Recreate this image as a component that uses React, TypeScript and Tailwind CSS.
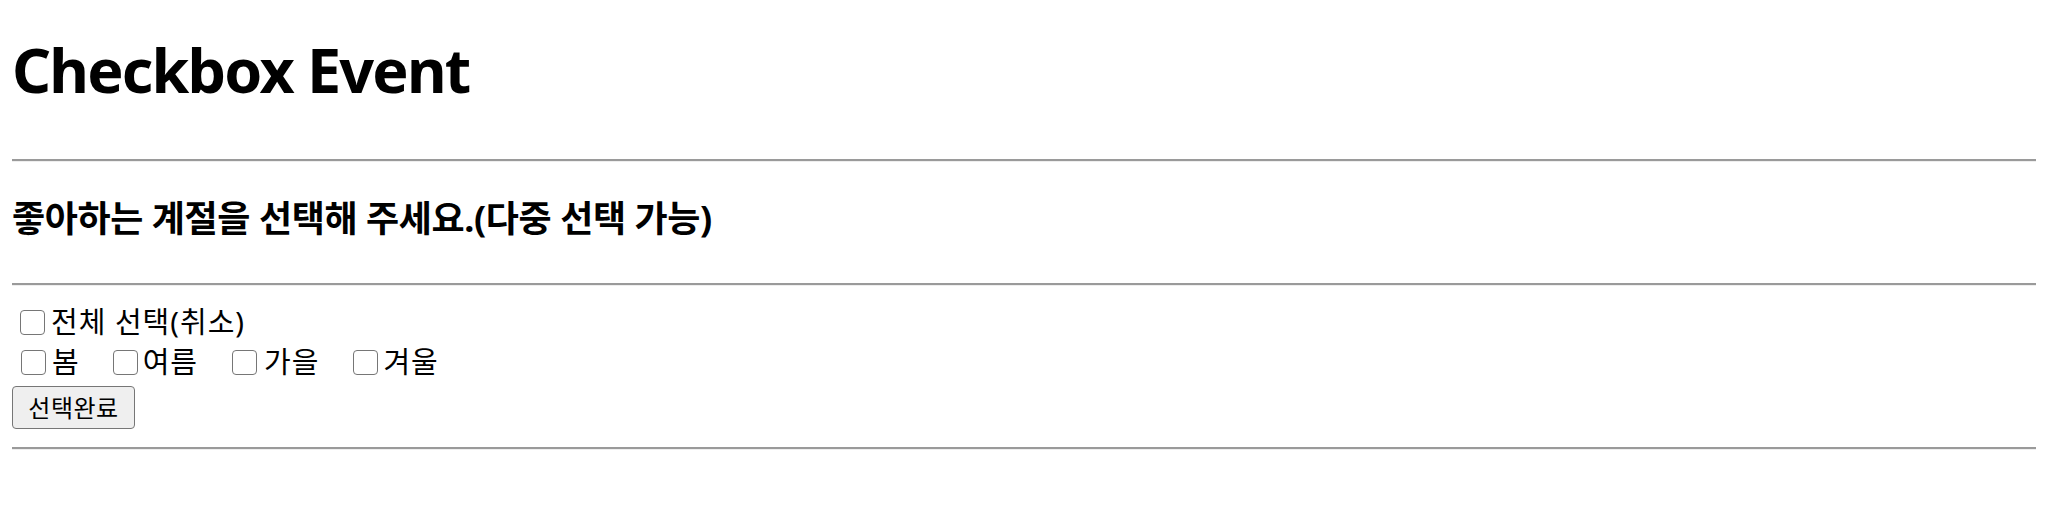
import React from "react";

const Box = ({ className = "" }: { className?: string }) => (
  <input
    type="checkbox"
    className={
      "appearance-none w-[25px] h-[25px] shrink-0 rounded-[4px] border-[1.5px] border-[#767676] bg-white " +
      className
    }
  />
);

export default function App() {
  return (
    <div
      className="pl-[12px] pr-[16px] text-black bg-white min-h-[526px]"
      style={{ fontFamily: '"Noto Sans", "Noto Sans CJK KR", sans-serif' }}
    >
      <h1 className="h-[159px] pt-[34px] text-[61px] leading-[72px] font-bold tracking-[-1.8px]">
        Checkbox Event
      </h1>
      <div className="h-[3px] border-t-[2px] border-t-[#9a9a9a] border-b border-b-[#eeeeee]" />
      <h2 className="h-[121px] pt-[37px] text-[36px] leading-[40px] font-bold tracking-[-0.4px]">
        좋아하는 계절을 선택해 주세요.(다중 선택 가능)
      </h2>
      <div className="h-[3px] border-t-[2px] border-t-[#9a9a9a] border-b border-b-[#eeeeee]" />
      <div className="pt-[16px] text-[29px] tracking-[1px]">
        <div className="flex items-center h-[40px]">
          <Box className="ml-[8px]" />
          <label className="ml-[6px] leading-[40px]">전체 선택(취소)</label>
        </div>
        <div className="flex items-center h-[40px]">
          <Box className="ml-[9px]" />
          <label className="ml-[6px] leading-[40px]">봄</label>
          <Box className="ml-[33px]" />
          <label className="ml-[5px] leading-[40px]">여름</label>
          <Box className="ml-[34px]" />
          <label className="ml-[7px] leading-[40px]">가을</label>
          <Box className="ml-[34px]" />
          <label className="ml-[5px] leading-[40px]">겨울</label>
        </div>
        <div className="flex pt-[4px]">
          <button className="h-[43px] w-[123px] rounded-[4px] border-[1.5px] border-[#767676] bg-[#efefef] text-[24px] leading-[40px] tracking-[0.5px]">
            선택완료
          </button>
        </div>
      </div>
      <div className="mt-[18px] h-[3px] border-t-[2px] border-t-[#9a9a9a] border-b border-b-[#eeeeee]" />
    </div>
  );
}
